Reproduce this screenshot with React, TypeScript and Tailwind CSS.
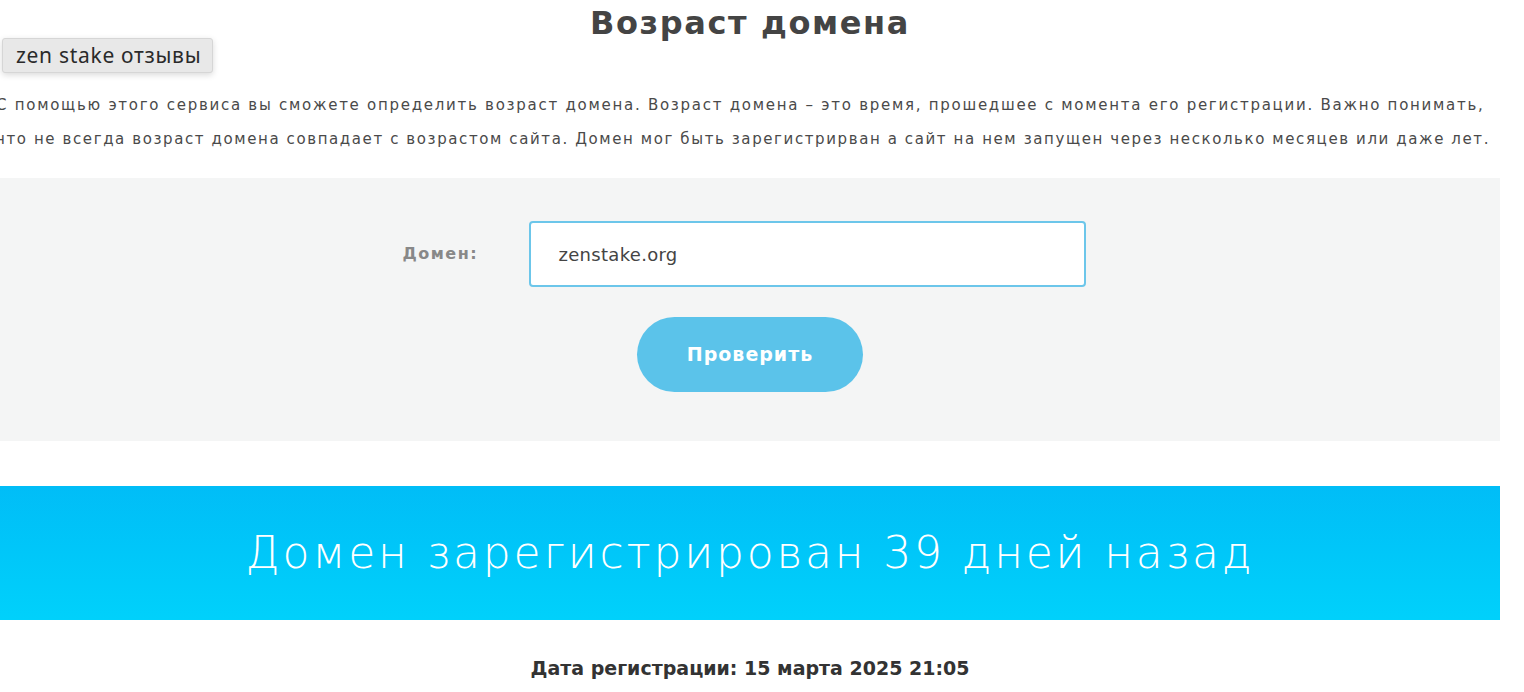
import React from "react";

export default function App() {
  return (
    <div className="relative w-[1524px] h-[692px] overflow-hidden bg-white" style={{ fontFamily: '"DejaVu Sans", sans-serif' }}>
      <div className="w-[1500px] flex flex-col">
        <h1 className="text-center text-[32px] font-bold text-[#444] leading-[44px] mt-[1px] tracking-[1.6px]">Возраст домена</h1>
        <div className="h-[43px]" />
        <div className="-ml-[4px] text-[15px] leading-[34px] text-[#4a4a4a]">
          <div className="whitespace-nowrap tracking-[1.73px]">С помощью этого сервиса вы сможете определить возраст домена. Возраст домена – это время, прошедшее с момента его регистрации. Важно понимать,</div>
          <div className="whitespace-nowrap tracking-[1.6px]">что не всегда возраст домена совпадает с возрастом сайта. Домен мог быть зарегистрирван а сайт на нем запущен через несколько месяцев или даже лет.</div>
        </div>
        <div className="mt-[22px] h-[263px] bg-[#f4f5f5] flex flex-col items-center pt-[43px]">
          <div className="flex items-center -ml-[12px]">
            <span className="w-[126px] text-[16px] font-bold text-[#888] tracking-[1.5px]">Домен:</span>
            <div className="w-[557px] h-[66px] border-2 border-[#6cc6ea] rounded-[4px] bg-white flex items-center pl-[28px] text-[18px] text-[#444] tracking-[0.3px]">zenstake.org</div>
          </div>
          <button className="mt-[30px] w-[226px] h-[75px] rounded-full bg-[#5bc3ea] text-white text-[19px] font-bold tracking-[1px]">Проверить</button>
        </div>
        <div className="mt-[45px] h-[134px] bg-gradient-to-b from-[#01bdf7] to-[#00d1fb] flex items-center justify-center">
          <span className="text-white text-[44px] font-extralight tracking-[2.8px]">Домен зарегистрирован 39 дней назад</span>
        </div>
        <div className="mt-[34px] text-center text-[19px] font-bold text-[#333]">Дата регистрации: 15 марта 2025 21:05</div>
      </div>
      <div className="absolute left-[2px] top-[38px] w-[211px] h-[35px] rounded-[3px] bg-[#e8e8e8] border border-[#d6d6d6] shadow-[0_2px_6px_rgba(0,0,0,0.15)] flex items-center pl-[13px] text-[21px] text-[#2a2a2a] tracking-[0.7px]" style={{ fontFamily: '"Noto Sans", sans-serif' }}>
        zen stake отзывы
      </div>
    </div>
  );
}
